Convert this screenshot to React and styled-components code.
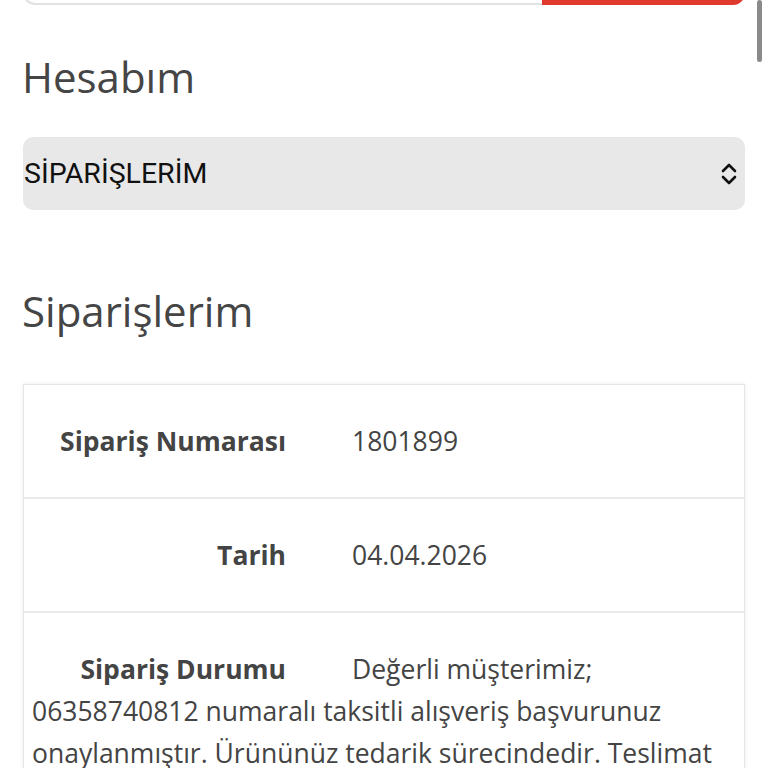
import React from "react";
import styled, { createGlobalStyle } from "styled-components";

const GlobalStyle = createGlobalStyle`
  html, body {
    margin: 0;
    padding: 0;
    background: #fff;
    overflow: hidden;
  }
  body {
    font-family: "Open Sans", "Lato", sans-serif;
    color: #444;
  }
`;

const Page = styled.div`
  padding: 0 23px;
`;

const SearchBar = styled.div`
  display: flex;
  height: 52px;
  margin-top: -47px;
`;

const SearchInput = styled.div`
  flex: 1;
  border: 2px solid #e2e2e2;
  border-right: none;
  border-radius: 0 0 0 12px;
`;

const SearchButton = styled.div`
  width: 203px;
  background: #e03a2f;
  border-radius: 0 0 12px 0;
`;

const Heading = styled.h2`
  margin: ${(p) => p.top}px 0 0 -1px;
  font-size: 42px;
  font-weight: 400;
  line-height: 48px;
  color: #454545;
`;

const Select = styled.div`
  display: flex;
  align-items: center;
  justify-content: space-between;
  margin-top: 36px;
  height: 73px;
  padding: 0 8px 0 1px;
  background: #e8e8e8;
  border-radius: 10px;
  font-family: "Roboto", "Open Sans", sans-serif;
  font-size: 28.5px;
  color: #111;
`;

const Card = styled.div`
  margin-top: 49px;
  border: 1px solid #e6e6e6;
  box-shadow: 0 0 4px rgba(0, 0, 0, 0.08);
  background: #fff;
`;

const Row = styled.div`
  padding: 35px 8px;
  border-top: ${(p) => (p.first ? "none" : "2px solid #e9e9e9")};
  font-size: 26.5px;
  line-height: 42px;
  color: #444;
`;

const Label = styled.span`
  display: inline-block;
  width: 254px;
  text-align: right;
  font-weight: 700;
`;

const Value = styled.span`
  padding-left: 66px;
`;

const ScrollThumb = styled.div`
  position: fixed;
  top: 0;
  right: 6px;
  width: 5px;
  height: 62px;
  border-radius: 3px;
  background: #8a8a8a;
`;

const Chevrons = () => (
  <svg width="16" height="24" viewBox="0 0 16 24" fill="none" stroke="#111" strokeWidth="2.6" strokeLinecap="round" strokeLinejoin="round">
    <path d="M2 9 L8 3 L14 9" />
    <path d="M2 15 L8 21 L14 15" />
  </svg>
);

export default function App() {
  return (
    <>
      <GlobalStyle />
      <ScrollThumb />
      <Page>
        <SearchBar>
          <SearchInput />
          <SearchButton />
        </SearchBar>
        <Heading top={48}>Hesabım</Heading>
        <Select>
          <span>SİPARİŞLERİM</span>
          <Chevrons />
        </Select>
        <Heading top={77}>Siparişlerim</Heading>
        <Card>
          <Row first>
            <Label>Sipariş Numarası</Label>
            <Value>1801899</Value>
          </Row>
          <Row>
            <Label>Tarih</Label>
            <Value>04.04.2026</Value>
          </Row>
          <Row>
            <Label>Sipariş Durumu</Label>
            <Value>
              Değerli müşterimiz; 06358740812 numaralı taksitli alışveriş başvurunuz onaylanmıştır. Ürününüz tedarik sürecindedir. Teslimat
              süreci hakkında bilgilendirme yapılacaktır.
            </Value>
          </Row>
        </Card>
      </Page>
    </>
  );
}
